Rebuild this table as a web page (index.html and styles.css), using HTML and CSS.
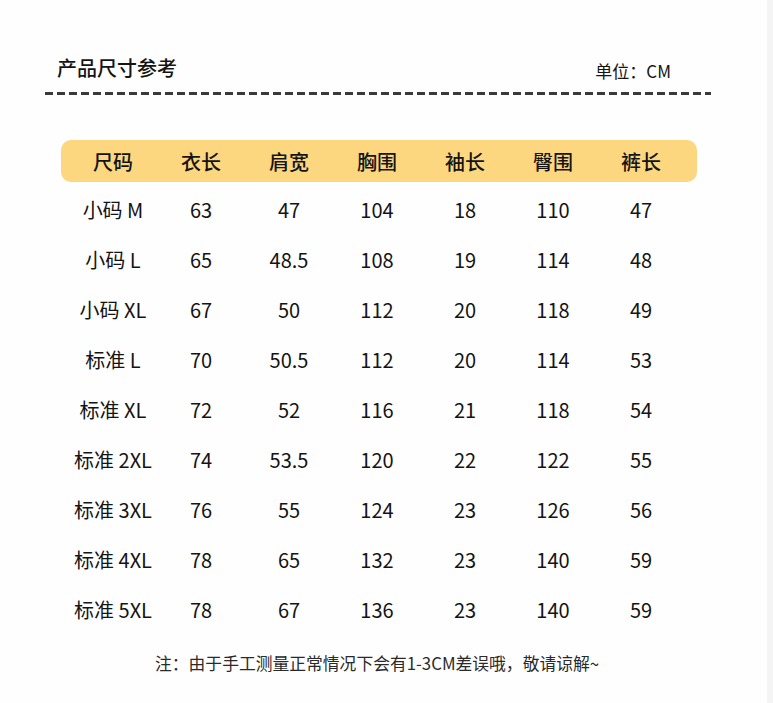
FILE: index.html
```html
<!DOCTYPE html>
<html lang="zh">
<head>
<meta charset="utf-8">
<link rel="stylesheet" href="styles.css">
</head>
<body>
<div class="page">
  <div class="sheet">
    <div class="head">
      <div class="title">产品尺寸参考</div>
      <div class="unit">单位：CM</div>
    </div>
    <div class="dash"></div>
    <div class="table">
      <div class="row thead"><span>尺码</span><span>衣长</span><span>肩宽</span><span>胸围</span><span>袖长</span><span>臀围</span><span>裤长</span></div>
      <div class="row"><span>小码 M</span><span>63</span><span>47</span><span>104</span><span>18</span><span>110</span><span>47</span></div>
      <div class="row"><span>小码 L</span><span>65</span><span>48.5</span><span>108</span><span>19</span><span>114</span><span>48</span></div>
      <div class="row"><span>小码 XL</span><span>67</span><span>50</span><span>112</span><span>20</span><span>118</span><span>49</span></div>
      <div class="row"><span>标准 L</span><span>70</span><span>50.5</span><span>112</span><span>20</span><span>114</span><span>53</span></div>
      <div class="row"><span>标准 XL</span><span>72</span><span>52</span><span>116</span><span>21</span><span>118</span><span>54</span></div>
      <div class="row"><span>标准 2XL</span><span>74</span><span>53.5</span><span>120</span><span>22</span><span>122</span><span>55</span></div>
      <div class="row"><span>标准 3XL</span><span>76</span><span>55</span><span>124</span><span>23</span><span>126</span><span>56</span></div>
      <div class="row"><span>标准 4XL</span><span>78</span><span>65</span><span>132</span><span>23</span><span>140</span><span>59</span></div>
      <div class="row"><span>标准 5XL</span><span>78</span><span>67</span><span>136</span><span>23</span><span>140</span><span>59</span></div>
    </div>
    <div class="note">注：由于手工测量正常情况下会有1-3CM差误哦，敬请谅解~</div>
  </div>
  <div class="edge"></div>
</div>
</body>
</html>
```
FILE: styles.css
```css
* { box-sizing: border-box; }
html, body { margin: 0; padding: 0; }
body {
  width: 773px;
  height: 703px;
  overflow: hidden;
  background: #fefefe;
  font-family: "Noto Sans CJK SC", "Noto Sans", sans-serif;
  color: #141414;
}
.page { display: flex; height: 703px; }
.sheet { width: 767px; padding-top: 53px; }
.edge { width: 6px; background: #f4f4f4; }
.head {
  display: flex;
  justify-content: space-between;
  align-items: flex-end;
  padding-left: 57px;
  padding-right: 96px;
  height: 30px;
}
.title { font-size: 20px; line-height: 30px; font-weight: 500; }
.unit { font-size: 17px; line-height: 24px; margin-bottom: 0; }
.dash {
  margin-top: 9px;
  margin-left: 45px;
  width: 666px;
  height: 3px;
  background: repeating-linear-gradient(90deg, #3a3a3a 0 8px, transparent 8px 12px);
}
.table {
  margin-top: 45px;
  margin-left: 61px;
  width: 636px;
}
.row {
  display: grid;
  grid-template-columns: repeat(7, 88px);
  padding-left: 8px;
  height: 50px;
  align-items: center;
  font-size: 20px;
}
.row span { text-align: center; white-space: nowrap; }
.thead {
  height: 42px;
  background: #fdd780;
  border-radius: 10px;
  margin-bottom: 2px;
  font-weight: 500;
}
.note {
  margin-top: 17px;
  padding-left: 155px;
  font-size: 16.8px;
  color: #2a2a2a;
}
```
